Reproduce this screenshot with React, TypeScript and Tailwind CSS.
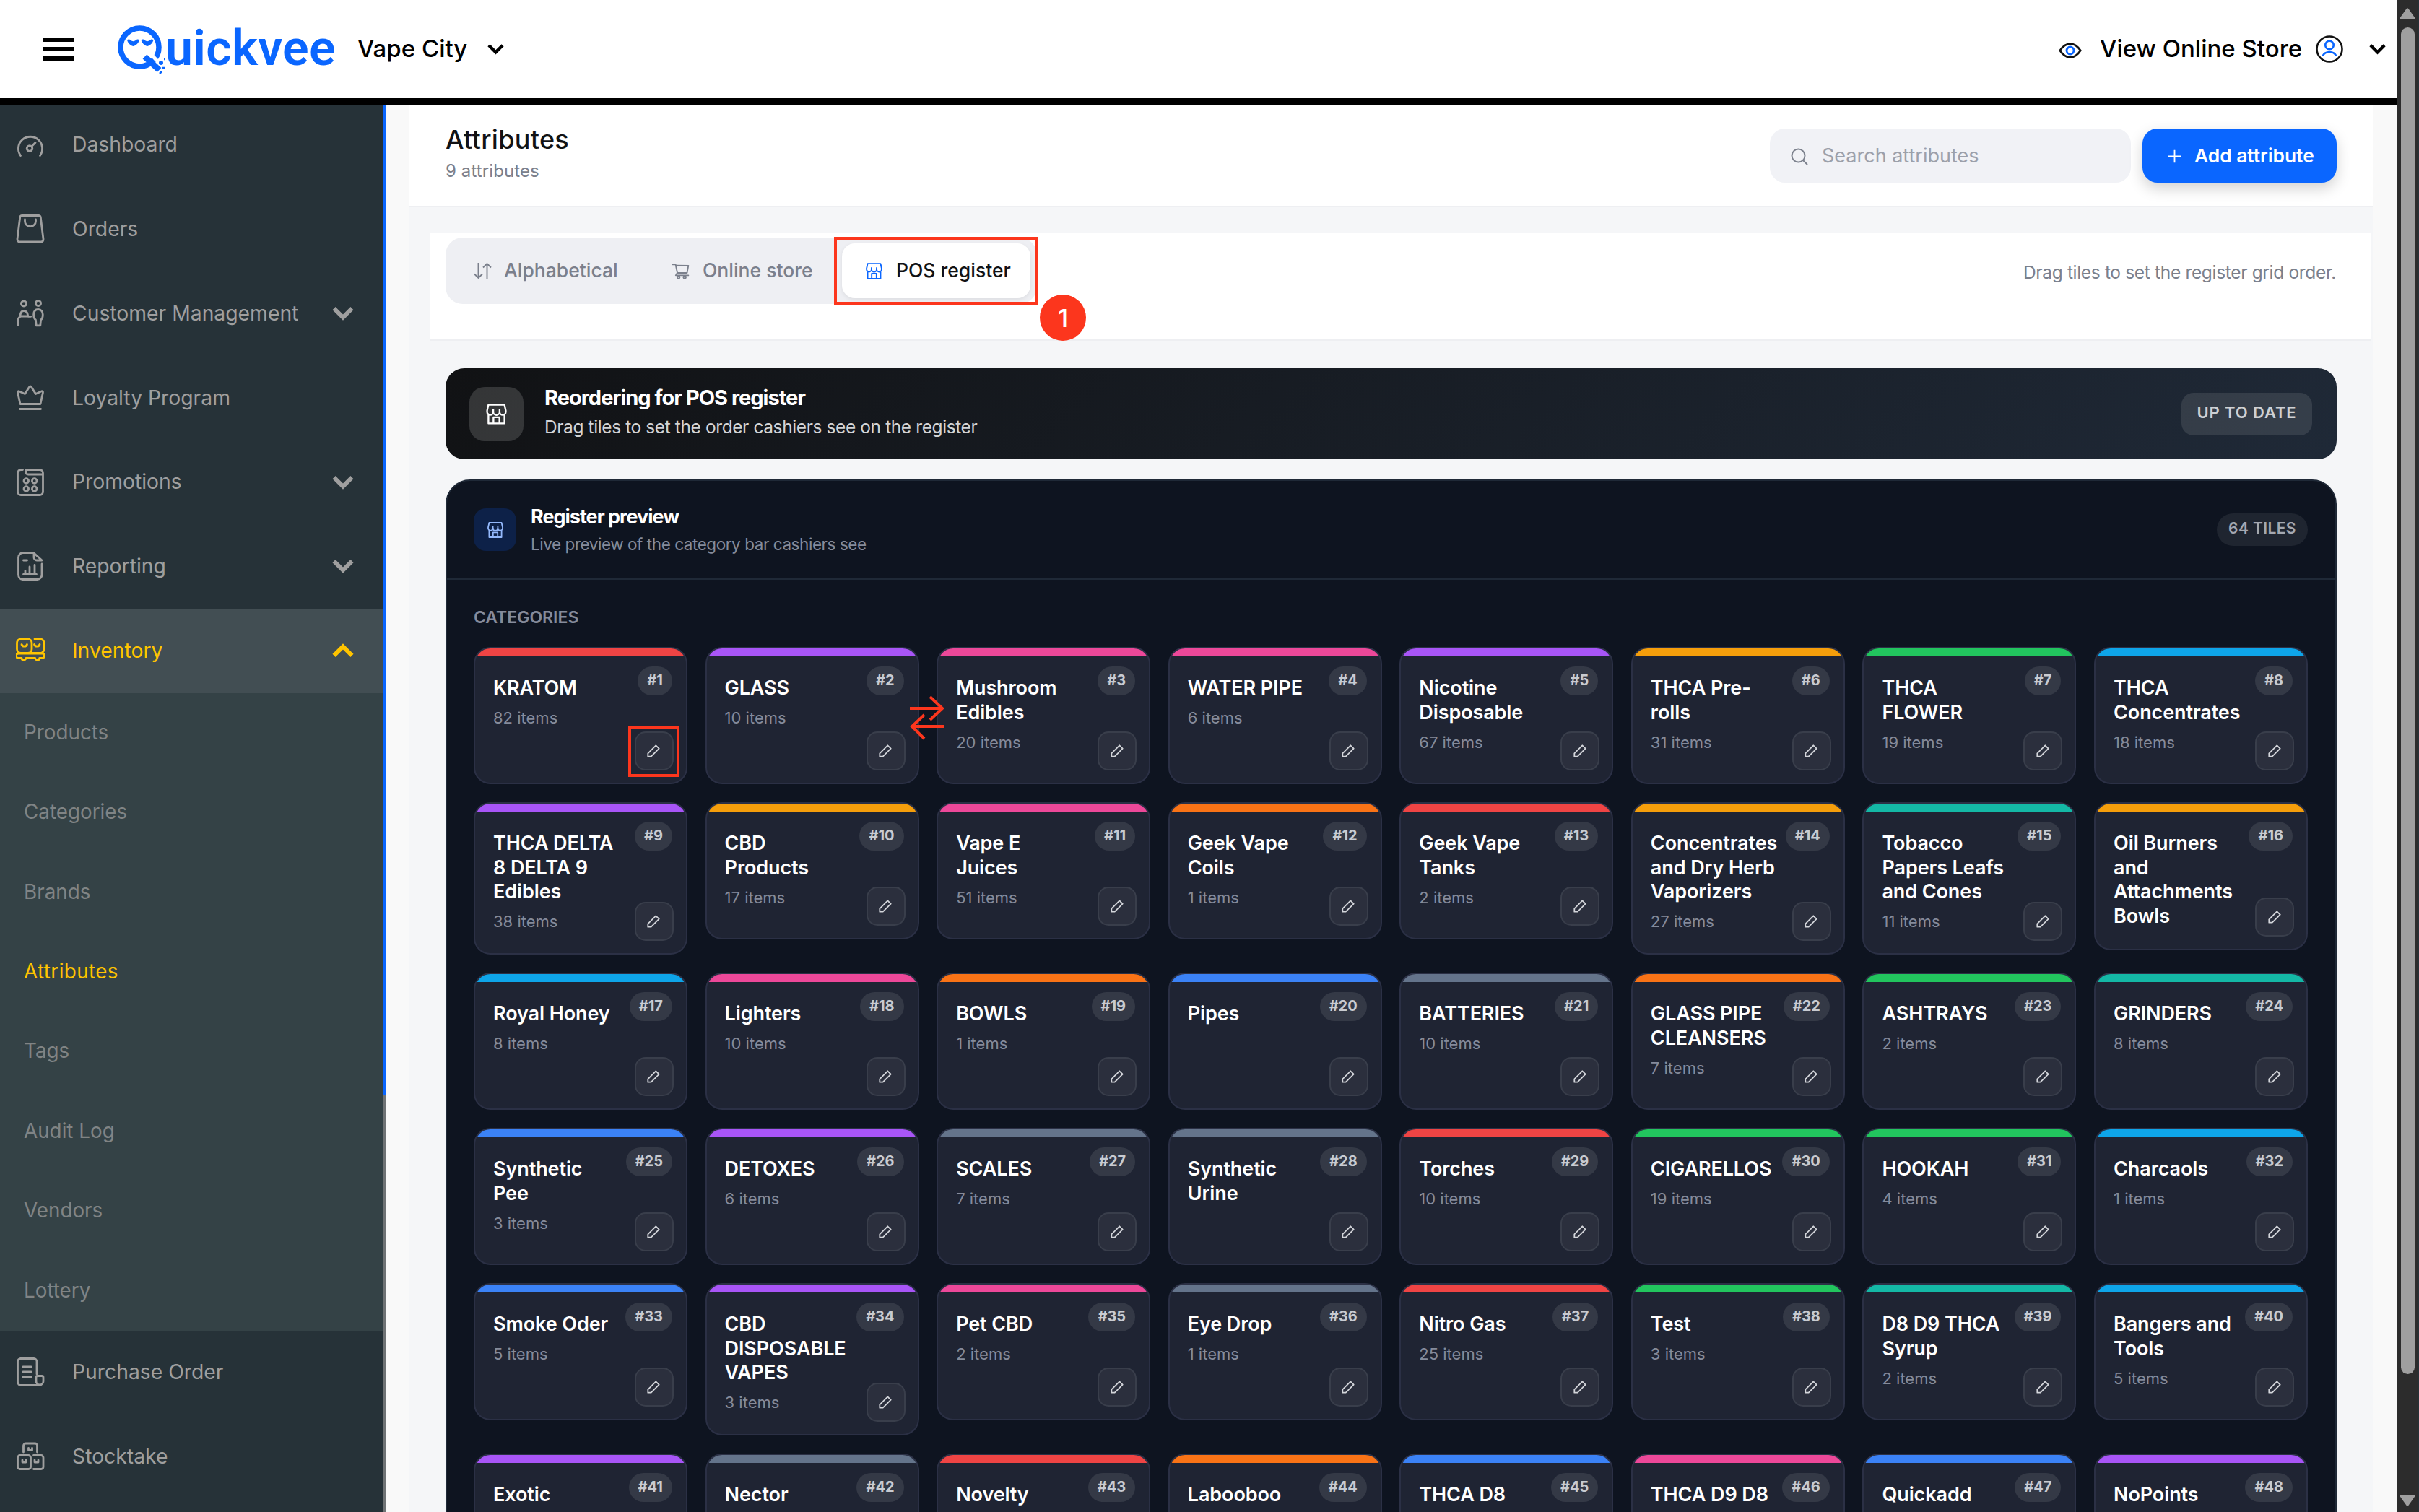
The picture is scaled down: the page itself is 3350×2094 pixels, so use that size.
import type { ReactNode } from "react";
import { AiOutlinePlus, AiOutlineShoppingCart } from "react-icons/ai";

type Tile = { name: string; items?: number; color: string };

const RED = "bg-[#ef4444]";
const PURPLE = "bg-[#a855f7]";
const PINK = "bg-[#ec4899]";
const AMBER = "bg-[#f59e0b]";
const GREEN = "bg-[#22c55e]";
const SKY = "bg-[#0ea5e9]";
const ORANGE = "bg-[#f97316]";
const TEAL = "bg-[#14b8a6]";
const BLUE = "bg-[#3b82f6]";
const SLATE = "bg-[#64748b]";

const tiles: Tile[] = [
  { name: "KRATOM", items: 82, color: RED },
  { name: "GLASS", items: 10, color: PURPLE },
  { name: "Mushroom\nEdibles", items: 20, color: PINK },
  { name: "WATER PIPE", items: 6, color: PINK },
  { name: "Nicotine\nDisposable", items: 67, color: PURPLE },
  { name: "THCA Pre-\nrolls", items: 31, color: AMBER },
  { name: "THCA\nFLOWER", items: 19, color: GREEN },
  { name: "THCA\nConcentrates", items: 18, color: SKY },
  { name: "THCA DELTA\n8 DELTA 9\nEdibles", items: 38, color: PURPLE },
  { name: "CBD\nProducts", items: 17, color: AMBER },
  { name: "Vape E\nJuices", items: 51, color: PINK },
  { name: "Geek Vape\nCoils", items: 1, color: ORANGE },
  { name: "Geek Vape\nTanks", items: 2, color: RED },
  { name: "Concentrates\nand Dry Herb\nVaporizers", items: 27, color: AMBER },
  { name: "Tobacco\nPapers Leafs\nand Cones", items: 11, color: TEAL },
  { name: "Oil Burners\nand\nAttachments\nBowls", color: AMBER },
  { name: "Royal Honey", items: 8, color: SKY },
  { name: "Lighters", items: 10, color: PINK },
  { name: "BOWLS", items: 1, color: ORANGE },
  { name: "Pipes", color: BLUE },
  { name: "BATTERIES", items: 10, color: SLATE },
  { name: "GLASS PIPE\nCLEANSERS", items: 7, color: ORANGE },
  { name: "ASHTRAYS", items: 2, color: GREEN },
  { name: "GRINDERS", items: 8, color: TEAL },
  { name: "Synthetic\nPee", items: 3, color: BLUE },
  { name: "DETOXES", items: 6, color: PURPLE },
  { name: "SCALES", items: 7, color: SLATE },
  { name: "Synthetic\nUrine", color: SLATE },
  { name: "Torches", items: 10, color: RED },
  { name: "CIGARELLOS", items: 19, color: GREEN },
  { name: "HOOKAH", items: 4, color: GREEN },
  { name: "Charcaols", items: 1, color: SKY },
  { name: "Smoke Oder", items: 5, color: BLUE },
  { name: "CBD\nDISPOSABLE\nVAPES", items: 3, color: PURPLE },
  { name: "Pet CBD", items: 2, color: PINK },
  { name: "Eye Drop", items: 1, color: SLATE },
  { name: "Nitro Gas", items: 25, color: RED },
  { name: "Test", items: 3, color: GREEN },
  { name: "D8 D9 THCA\nSyrup", items: 2, color: TEAL },
  { name: "Bangers and\nTools", items: 5, color: SKY },
  { name: "Exotic", color: PURPLE },
  { name: "Nector", color: SLATE },
  { name: "Novelty", color: RED },
  { name: "Labooboo", color: ORANGE },
  { name: "THCA D8", color: BLUE },
  { name: "THCA D9 D8", color: PINK },
  { name: "Quickadd", color: BLUE },
  { name: "NoPoints", color: PURPLE },
];

const subMenu = [
  "Products",
  "Categories",
  "Brands",
  "Attributes",
  "Tags",
  "Audit Log",
  "Vendors",
  "Lottery",
];

const Chevron = ({ className }: { className: string }) => (
  <svg viewBox="0 0 24 16" fill="none" stroke="currentColor" strokeWidth="4.6" className={className}>
    <path d="M2 2.5 12 12.5 22 2.5" />
  </svg>
);

const Shop = ({ className }: { className: string }) => (
  <svg viewBox="0 0 24 24" fill="none" stroke="currentColor" strokeWidth="1.8" strokeLinejoin="round" className={className}>
    <path d="M3.4 2h17.2l1.4 6.4v1.2a3.3 3.3 0 0 1-6.6 0 3.4 3.4 0 0 1-6.8 0 3.3 3.3 0 0 1-6.6 0V8.4z" />
    <path d="M8.6 10V7M15.4 10V7M3.4 12.6V22h17.2v-9.4M8.8 22v-6.6h6.4V22" />
  </svg>
);

const SideIcon = ({ children }: { children: ReactNode }) => (
  <svg
    viewBox="0 0 40 40"
    fill="none"
    stroke="currentColor"
    strokeWidth="2.8"
    strokeLinecap="round"
    strokeLinejoin="round"
    className="w-10 h-10 shrink-0"
  >
    {children}
  </svg>
);

const icons = {
  dashboard: (
    <SideIcon>
      <path d="M6.5 35.5A16.6 16.6 0 1 1 33.5 35.5" />
      <circle cx="19" cy="25.5" r="3.8" />
      <path d="m22 22.5 5-5" />
    </SideIcon>
  ),
  orders: (
    <SideIcon>
      <path d="M8.5 1.5h23c1.6 0 2.5.9 2.8 2.5l3.7 30c.2 2.4-.9 3.8-3.2 3.8H5.2C2.9 37.8 1.8 36.4 2 34L5.7 4c.3-1.6 1.2-2.5 2.8-2.5z" />
      <path d="M12.5 7v2.2a7.5 7.5 0 0 0 15 0V7" />
    </SideIcon>
  ),
  customers: (
    <SideIcon>
      <circle cx="11" cy="6.5" r="3.6" />
      <circle cx="31" cy="6" r="3.6" />
      <path d="M3.2 36.5v-7.500c0-2 .8-3 2.400-4l.4-2.500c.6-3.800 2.400-6 5-6 3 0 4.800 2 5.400 5.500l.4 2.300h4M6 24h10" />
      <path d="M31 14.500c-4.200 0-6.300 3-6.300 7.300 0 4 .9 6 2.700 7.200l.8 7.800h5.600l.8-7.800c1.800-1.200 2.700-3.200 2.700-7.200 0-4.300-2.100-7.300-6.300-7.300z" />
    </SideIcon>
  ),
  crown: (
    <SideIcon>
      <path d="M6 28.5 2.5 12.5c-.3-1.500 1-2.200 2.300-1.500l7.700 3.500L18.500 5c.9-1.500 2.100-1.500 3 0l6 9.500 7.700-3.500c1.300-.7 2.600 0 2.300 1.500L34 28.500zM5.500 35.500h29" />
    </SideIcon>
  ),
  promotions: (
    <SideIcon>
      <path d="M9.5 2.500H7A4.500 4.500 0 0 0 2.500 7v26A4.500 4.500 0 0 0 7 37.500h26a4.500 4.500 0 0 0 4.500-4.500V7A4.500 4.500 0 0 0 33 2.500H14V6c0 2 1 3 3 3h20" />
      <circle cx="14.3" cy="18" r="3.3" />
      <circle cx="25.7" cy="18" r="3.3" />
      <circle cx="14.3" cy="29" r="3.3" />
      <circle cx="25.7" cy="29" r="3.3" />
    </SideIcon>
  ),
  reporting: (
    <SideIcon>
      <path d="M36 17v15a6.500 6.500 0 0 1-6.500 6.500h-20A6.500 6.500 0 0 1 3.500 32V8A6.500 6.500 0 0 1 10 1.500h14.500L36 12H29a4 4 0 0 1-4-4V2" />
      <path d="M10.500 12h5M10.500 31.500h18M13 30v-3.500M19 30v-9M26 30V18.500" />
    </SideIcon>
  ),
  inventory: (
    <SideIcon>
      <rect x="1.500" y="4" width="20.500" height="19.500" rx="5.500" />
      <path d="M26 4h7.500A5.500 5.500 0 0 1 39 9.500V18a5.500 5.500 0 0 1-5.500 5.500H19" />
      <path d="M8 11.500c1 3.500 6.500 3.500 7.500 0M25.500 11.500c1 3.500 6.500 3.500 7.500 0" />
      <path d="M3.500 24h33a3 3 0 0 1 0 6.500h-3.800c-.5 3.600-5 3.600-6 0H14c-1 3.600-5.500 3.600-6 0H3.500a3 3 0 0 1 0-6.500z" />
    </SideIcon>
  ),
  purchase: (
    <SideIcon>
      <path d="M29 23V5.500A4 4 0 0 0 25 1.500H6.500a4 4 0 0 0-4 4V34a4.500 4.500 0 0 0 4.500 4.500h26" />
      <path d="M28 33v-5.500a2 2 0 0 1 2-2h6a2 2 0 0 1 2 2V33a5 5 0 0 1-10 0z" />
      <path d="M10 13h11M10 20h11M10 27h11" />
    </SideIcon>
  ),
  stocktake: (
    <SideIcon>
      <path d="M10.500 14V5a3 3 0 0 1 3-3h13a3 3 0 0 1 3 3v9" />
      <rect x="2.500" y="18.500" width="18" height="19" rx="3" />
      <path d="M24.500 18.500H35a3 3 0 0 1 3 3v13a3 3 0 0 1-3 3H24.500" />
      <path d="M17.500 8.500v3h5v-3M9 25v3h5v-3M26 25v3h5v-3" />
    </SideIcon>
  ),
};

const MenuItem = ({
  icon,
  label,
  arrow,
  active,
}: {
  icon: ReactNode;
  label: string;
  arrow?: boolean;
  active?: boolean;
}) => (
  <div
    className={
      "flex h-[116.8px] shrink-0 items-center pl-[22px] pr-[40px] text-[28.3px] " +
      (active ? "bg-[#424e53] text-[#ffc400]" : "text-[#9f9f9f]")
    }
  >
    {icon}
    <span className="ml-[38px] flex-1 whitespace-nowrap">{label}</span>
    {arrow && <Chevron className={active ? "h-5 w-[30px] rotate-180" : "h-5 w-[30px]"} />}
  </div>
);

const Sidebar = () => (
  <aside className="flex h-full w-[534px] shrink-0">
    <div className="flex w-[530px] flex-col overflow-hidden bg-[#263238]">
      <MenuItem icon={icons.dashboard} label="Dashboard" />
      <MenuItem icon={icons.orders} label="Orders" />
      <MenuItem icon={icons.customers} label="Customer Management" arrow />
      <MenuItem icon={icons.crown} label="Loyalty Program" />
      <MenuItem icon={icons.promotions} label="Promotions" arrow />
      <MenuItem icon={icons.reporting} label="Reporting" arrow />
      <MenuItem icon={icons.inventory} label="Inventory" arrow active />
      <div className="shrink-0 bg-[#344246]">
        {subMenu.map((label) => (
          <div
            key={label}
            className={
              "flex h-[110.4px] items-center pl-[33px] text-[27.8px] " +
              (label === "Attributes" ? "tracking-[0.4px] text-[#ffc400]" : "text-[#808485]")
            }
          >
            {label}
          </div>
        ))}
      </div>
      <div className="-mt-px flex flex-col">
        <MenuItem icon={icons.purchase} label="Purchase Order" />
        <MenuItem icon={icons.stocktake} label="Stocktake" />
      </div>
    </div>
    <div className="flex w-1 flex-col bg-[#6f7375]">
      <div className="h-[1374px] bg-[#0a66ff]" />
    </div>
  </aside>
);

const Logo = () => (
  <div className="flex h-full w-[303px] items-center">
    <svg viewBox="0 0 66 70" fill="none" stroke="#0a66ff" className="mt-[3px] h-[70px] w-[66px] shrink-0">
      <circle cx="30.5" cy="30.5" r="26.5" strokeWidth="7.5" />
      <path
        d="M13 20.500c1.500-1.500 4-1 5.200.6 1.800 1.500 4.800 1.500 6.600 0 1.200-1.600 3.700-2.100 5.200-.6-1 3.500-4 7.500-8.500 8.500-4.500-1-7.500-5-8.500-8.500zM32.500 20.500c1.500-1.500 4-1 5.200.6 1.800 1.500 4.800 1.500 6.600 0 1.200-1.600 3.700-2.100 5.200-.6-1 3.500-4 7.500-8.500 8.500-4.500-1-7.500-5-8.500-8.500z"
        fill="#0a66ff"
        stroke="none"
      />
      <path d="m46 40 14 15" stroke="#fff" strokeWidth="5" />
      <path d="M37.500 43.500 57.500 62" strokeWidth="8.500" />
      <circle cx="60" cy="52" r="3" fill="#0a66ff" stroke="none" />
      <path d="M62 59h3M58 67l3-3M64 47h2" strokeWidth="2.5" />
    </svg>
    <span className="-mt-[2px] font-['Roboto'] text-[68px] font-semibold leading-none tracking-[0.3px] text-[#0a66ff]">
      uickvee
    </span>
  </div>
);

const Header = () => (
  <header className="relative z-10 flex h-[146px] items-center border-b-[10px] border-black bg-white text-[33px] font-medium text-black">
    <div className="ml-[60px] flex w-[42px] flex-col gap-[7px]">
      <span className="h-1.5 bg-black" />
      <span className="h-1.5 bg-black" />
      <span className="h-1.5 bg-black" />
    </div>
    <div className="ml-[61px] h-full">
      <Logo />
    </div>
    <span className="ml-[29px] w-[152px] whitespace-nowrap">Vape City</span>
    <Chevron className="ml-[28px] h-4 w-[23px]" />
    <div className="ml-auto mr-[46px] flex items-center">
      <svg viewBox="0 0 32 22" fill="none" strokeWidth="2.8" className="mt-[3px] h-[22px] w-8">
        <path d="M1.8 11C6 4.5 10.500 1.600 16 1.600S26 4.500 30.200 11C26 17.500 21.500 20.400 16 20.400S6 17.500 1.800 11z" stroke="#111" />
        <circle cx="16" cy="11" r="5" stroke="#0a66ff" />
      </svg>
      <span className="ml-[25px] w-[276px] whitespace-nowrap">View Online Store</span>
      <svg viewBox="0 0 38 38" fill="none" strokeWidth="2.6" className="ml-[23px] h-[38px] w-[38px]">
        <circle cx="19" cy="19" r="17.5" stroke="#111" />
        <circle cx="19" cy="13.5" r="5.8" stroke="#0a66ff" />
        <path d="M9.500 28.500c2-4 5.500-5.500 9.500-5.500s7.500 1.500 9.500 5.500" stroke="#0a66ff" />
      </svg>
      <Chevron className="ml-[36px] h-4 w-[23px]" />
    </div>
    <div className="absolute -bottom-[10px] right-0 h-[10px] w-[31px] bg-[#2c2c2c]" />
  </header>
);

const Scrollbar = () => (
  <div className="absolute right-0 top-0 z-20 flex h-[2094px] w-[31px] flex-col items-center border-r border-[#263238] bg-[#2c2c2c] pb-2 pt-[11px]">
    <svg viewBox="0 0 22 16" className="h-4 w-[22px] shrink-0 fill-[#9f9f9f]">
      <path d="M9.500 1.200q1.500-2 3 0l9 12.800q.5 2-1.500 2H2q-2 0-1.500-2z" />
    </svg>
    <div className="mt-[11px] h-[1865px] w-[19px] shrink-0 rounded-full bg-[#9f9f9f]" />
    <svg viewBox="0 0 22 16" className="mt-auto h-4 w-[22px] shrink-0 rotate-180 fill-[#9f9f9f]">
      <path d="M9.500 1.200q1.500-2 3 0l9 12.800q.5 2-1.500 2H2q-2 0-1.500-2z" />
    </svg>
  </div>
);

const PageHeader = () => (
  <div className="flex h-[141px] items-start border-b-2 border-[#eeeff2] bg-white pl-[51px] pr-[50px] pt-6">
    <div className="flex-1">
      <h1 className="pt-px text-[36px] font-medium leading-[45px] tracking-[0.3px] text-[#111214]">Attributes</h1>
      <p className="mt-1.5 text-[24px] leading-[30px] tracking-[0.1px] text-[#7b808c]">9 attributes</p>
    </div>
    <div className="mt-2 flex h-[75px] w-[500px] items-center rounded-[21px] bg-[#f1f2f6] pl-[29px] text-[#9ca0aa]">
      <svg viewBox="0 0 24 24" fill="none" stroke="#7b808c" strokeWidth="2" className="mt-0.5 h-6 w-6">
        <circle cx="10.500" cy="10.500" r="9" />
        <path d="m17 17 6 6" />
      </svg>
      <span className="ml-[19px] mt-0.5 text-[27px]">Search attributes</span>
    </div>
    <div className="ml-4 mt-2 flex h-[75px] w-[269px] items-center rounded-[21px] bg-[#0a66ff] pl-[32px] text-white shadow-[0_8px_20px_rgba(0,0,0,0.18)]">
      <AiOutlinePlus className="mt-0.5 h-[25px] w-[25px]" />
      <span className="ml-[15px] mt-px whitespace-nowrap text-[26.3px] font-semibold">Add attribute</span>
    </div>
  </div>
);

const Tabs = () => (
  <div className="ml-[30px] mr-[2px] mt-[35px] flex h-[150px] items-start border-b-2 border-[#eeeff2] bg-white pl-[21px] pr-[49px] pt-[7px]">
    <div className="relative flex h-[92px] w-[819px] items-center rounded-[24px] bg-[#eeeff3] text-[26.5px] font-medium text-[#7b808c]">
      <svg viewBox="0 0 25 24" fill="none" stroke="currentColor" strokeWidth="1.9" className="ml-[39px] h-6 w-[25px]">
        <path d="M6.500 1v21M1 16.500l5.500 5.500 5.500-5.500M18.500 23V2M13 7.500 18.500 2 24 7.500" />
      </svg>
      <span className="ml-[17px] w-[155px] whitespace-nowrap">Alphabetical</span>
      <AiOutlineShoppingCart className="ml-[76px] h-[27px] w-[27px]" />
      <span className="ml-[17px] w-[151px] whitespace-nowrap">Online store</span>
      <div className="ml-[42px] flex h-[76px] w-[261px] items-center rounded-[18px] bg-white text-[#111214] shadow-[0_2px_6px_rgba(0,0,0,0.08)]">
        <Shop className="ml-[32px] h-[25px] w-[25px] text-[#0a66ff]" />
        <span className="ml-[18px] whitespace-nowrap">POS register</span>
      </div>
      <div className="absolute -right-px -top-px h-[94px] w-[282px] border-4 border-[#fc361d]" />
      <div className="absolute left-[823px] top-[79px] flex h-16 w-16 items-center justify-center rounded-full bg-[#fc361d] text-[34px] text-white">
        1
      </div>
    </div>
    <p className="ml-auto mt-[28px] text-[24.5px] leading-[40px] tracking-[-0.33px] text-[#7b808c]">
      Drag tiles to set the register grid order.
    </p>
  </div>
);

const Banner = () => (
  <div className="ml-[51px] mr-[50px] mt-[38px] flex h-[126px] items-center rounded-[26px] bg-[linear-gradient(135deg,#111214_0%,#1f2937_100%)] px-[33px]">
    <div className="flex h-[75px] w-[75px] items-center justify-center rounded-[21px] bg-white/15 text-white">
      <Shop className="h-[31px] w-[31px]" />
    </div>
    <div className="mb-1 ml-[29px]">
      <h2 className="text-[29px] font-bold leading-[40px] tracking-[-1px] text-white">Reordering for POS register</h2>
      <p className="text-[24.5px] leading-[40px] tracking-[-0.4px] text-[#d3d4d6]">
        Drag tiles to set the order cashiers see on the register
      </p>
    </div>
    <span className="ml-auto mr-px flex h-[59px] w-[181px] items-center justify-center rounded-[17px] bg-white/10 pb-[3px] text-[22px] font-semibold tracking-[0.9px] text-[#ced0d3]">
      UP TO DATE
    </span>
  </div>
);

const RegisterTile = ({ tile, index }: { tile: Tile; index: number }) => (
  <div className="relative min-h-[190px] overflow-hidden rounded-[23px] border-2 border-[#2b3045] bg-[#1f2433] pb-[29px] pl-[25px] pt-[38px]">
    <div className={"absolute inset-x-0 top-0 h-[11px] " + tile.color} />
    <h3 className="whitespace-pre text-[27px] font-semibold leading-[33.5px] tracking-[-0.1px] text-white">{tile.name}</h3>
    {tile.items && <p className="mt-[10.5px] text-[22px] leading-[29px] text-[#858b9b]">{tile.items} items</p>}
    <span className="absolute right-[19px] top-[25px] flex h-10 items-center rounded-full bg-[#343946] px-[13px] pb-[3px] text-[20px] font-bold text-[#c8cbd1]">
      #{index + 1}
    </span>
    <div className="absolute bottom-[17px] right-[17px] flex h-[54px] w-[54px] items-center justify-center rounded-[15px] border-2 border-[#393e4b] bg-[#2b2f3d] pr-px">
      <svg viewBox="0 0 18 18" fill="none" stroke="#d3d5da" strokeWidth="1.8" strokeLinejoin="round" className="h-[18px] w-[18px]">
        <path d="M1.300 16.700v-4.400L12.300 1.300l4.400 4.400-11 11z" />
      </svg>
    </div>
  </div>
);

const RegisterPreview = () => (
  <section className="ml-[51px] mr-[50px] mt-[28px] rounded-t-[34px] border-2 border-[#1f2937] bg-[#0e1420]">
    <div className="flex h-[137px] items-center border-b-2 border-[#1f2937] px-[37px]">
      <div className="flex h-[59px] w-[59px] items-center justify-center rounded-[17px] bg-[#0d2148] text-[#93b8fb]">
        <Shop className="h-[24px] w-[24px]" />
      </div>
      <div className="ml-[20px] mt-0.5">
        <h2 className="text-[27px] font-bold leading-[38px] tracking-[-1px] text-white">Register preview</h2>
        <p className="text-[22.5px] leading-[37px] tracking-[-0.45px] text-[#858b9b]">
          Live preview of the category bar cashiers see
        </p>
      </div>
      <span className="ml-auto mr-px flex h-[45px] w-[126px] items-center justify-center rounded-full bg-[#1f2530] pb-[3px] text-[21px] font-semibold tracking-[0.4px] text-[#a4a8b1]">
        64 TILES
      </span>
    </div>
    <p className="ml-[37px] mt-[33px] text-[23px] font-semibold leading-[38px] text-[#858b9b]">CATEGORIES</p>
    <div className="ml-[37px] mr-[38px] mt-[22px] grid grid-cols-8 items-start gap-x-[24.6px] gap-y-[25px]">
      {tiles.map((tile, i) => (
        <RegisterTile key={tile.name} tile={tile} index={i} />
      ))}
    </div>
  </section>
);

// red callouts drawn over the first row of tiles
const Annotations = () => (
  <>
    <div className="absolute left-[870px] top-[1005px] h-[71px] w-[71px] border-4 border-[#fc361d]" />
    <svg
      viewBox="0 0 50 62"
      fill="none"
      stroke="#fc361d"
      strokeWidth="4"
      className="absolute left-[1259px] top-[963px] h-[62px] w-[50px]"
    >
      <path d="M1 18h46M29 2l17 16-17 16M49 43H3M21 27 4 43l17 17" />
    </svg>
  </>
);

export default function App() {
  return (
    <div className="relative h-[2094px] w-[3350px] overflow-hidden bg-[#f9f9f9] font-['Inter',sans-serif]">
      <Header />
      <div className="-mt-1 flex h-[1952px]">
        <Sidebar />
        <main className="ml-8 mr-[64px] flex-1 bg-[#f5f6f8] pt-1">
          <PageHeader />
          <Tabs />
          <Banner />
          <RegisterPreview />
        </main>
      </div>
      <Annotations />
      <Scrollbar />
    </div>
  );
}
